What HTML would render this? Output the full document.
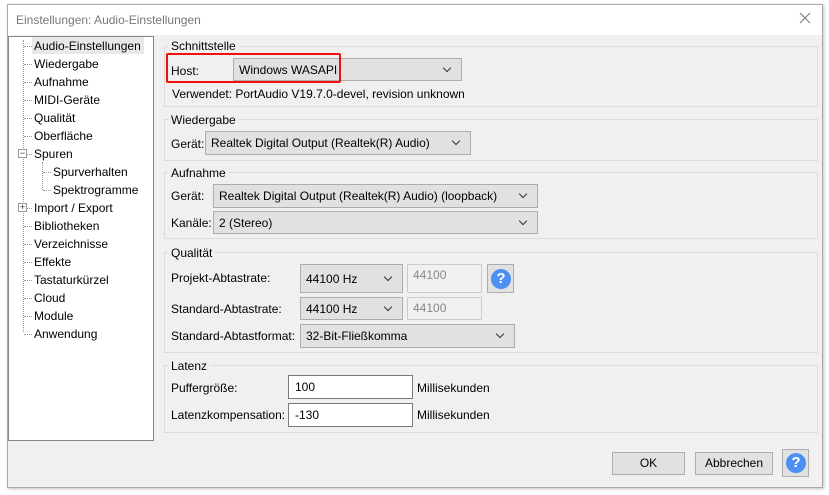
<!DOCTYPE html><html><head><style>
*{box-sizing:border-box;margin:0;padding:0}
body{width:829px;height:495px;background:#fff;font-family:"Liberation Sans",sans-serif;font-size:12px;color:#000;position:relative;overflow:hidden}
.a{position:absolute;white-space:nowrap}
.win{position:absolute;left:7px;top:4px;width:816px;height:484px;border:1px solid #aaa;background:#f0f0f0;box-shadow:1px 1px 3px rgba(0,0,0,.25)}
.title{position:absolute;left:8px;top:5px;width:814px;height:30px;background:#fff}
.grp{position:absolute;border:1px solid #dcdcdc;left:164px;width:654px}
.gl{position:absolute;background:#f0f0f0;padding:0 3px;left:168px;line-height:14px}
.cb{position:absolute;background:#e1e1e1;border:1px solid #adadad;padding-left:5px;display:flex;align-items:center;white-space:nowrap}
.cb:after{content:"";position:absolute;right:11px;top:50%;margin-top:-5px;width:5px;height:5px;border-right:1px solid #333;border-bottom:1px solid #333;transform:rotate(45deg)}
.tb{position:absolute;background:#fff;border:1px solid #7a7a7a;padding-left:6px;display:flex;align-items:center}
.dis{position:absolute;background:#f0f0f0;border:1px solid #ccc;color:#888;padding-left:5px;line-height:20px}
.btn{position:absolute;background:#e1e1e1;border:1px solid #adadad;text-align:center;line-height:21px}
.help{position:absolute;background:#e1e1e1;border:1px solid #adadad}
.help i{position:absolute;left:3px;top:3px;width:20px;height:20px;border-radius:50%;background:#4e8ff2;color:#fff;font-style:normal;font-weight:bold;font-size:15px;text-align:center;line-height:20px}
.tree{position:absolute;left:8px;top:36px;width:146px;height:405px;background:#fff;border:1px solid #828790}
.ti{position:absolute;line-height:16px}
.dl{position:absolute;border-top:1px dotted #999;height:0}
.vl{position:absolute;border-left:1px dotted #999;width:0}
.pm{position:absolute;width:9px;height:9px;border:1px solid #999;background:#fff;font-size:9px;line-height:7px;text-align:center;color:#333}
</style></head><body>
<div class="win"></div>
<div class="title"></div>
<div class="a" style="left:16px;top:13px;color:#777">Einstellungen: Audio-Einstellungen</div>
<svg class="a" style="left:799px;top:12px" width="12" height="12"><path d="M1 1L11 11M11 1L1 11" stroke="#777" stroke-width="1"/></svg>

<div class="tree"></div>
<div class="vl" style="left:23px;top:40px;height:292px"></div>
<div class="vl" style="left:42px;top:162px;height:28px"></div>
<div class="a" style="left:32px;top:37px;width:112px;height:17px;background:#e8e8e8"></div>
<div class="dl" style="left:24px;top:46px;width:8px"></div><div class="ti" style="left:34px;top:38px">Audio-Einstellungen</div>
<div class="dl" style="left:24px;top:64px;width:8px"></div><div class="ti" style="left:34px;top:56px">Wiedergabe</div>
<div class="dl" style="left:24px;top:82px;width:8px"></div><div class="ti" style="left:34px;top:74px">Aufnahme</div>
<div class="dl" style="left:24px;top:100px;width:8px"></div><div class="ti" style="left:34px;top:92px">MIDI-Geräte</div>
<div class="dl" style="left:24px;top:118px;width:8px"></div><div class="ti" style="left:34px;top:110px">Qualität</div>
<div class="dl" style="left:24px;top:136px;width:8px"></div><div class="ti" style="left:34px;top:128px">Oberfläche</div>
<div class="dl" style="left:24px;top:154px;width:8px"></div><div class="pm" style="left:18px;top:149px">−</div><div class="ti" style="left:34px;top:146px">Spuren</div>
<div class="dl" style="left:43px;top:172px;width:8px"></div><div class="ti" style="left:53px;top:164px">Spurverhalten</div>
<div class="dl" style="left:43px;top:190px;width:8px"></div><div class="ti" style="left:53px;top:182px">Spektrogramme</div>
<div class="dl" style="left:24px;top:208px;width:8px"></div><div class="pm" style="left:18px;top:203px">+</div><div class="ti" style="left:34px;top:200px">Import / Export</div>
<div class="dl" style="left:24px;top:226px;width:8px"></div><div class="ti" style="left:34px;top:218px">Bibliotheken</div>
<div class="dl" style="left:24px;top:244px;width:8px"></div><div class="ti" style="left:34px;top:236px">Verzeichnisse</div>
<div class="dl" style="left:24px;top:262px;width:8px"></div><div class="ti" style="left:34px;top:254px">Effekte</div>
<div class="dl" style="left:24px;top:280px;width:8px"></div><div class="ti" style="left:34px;top:272px">Tastaturkürzel</div>
<div class="dl" style="left:24px;top:298px;width:8px"></div><div class="ti" style="left:34px;top:290px">Cloud</div>
<div class="dl" style="left:24px;top:316px;width:8px"></div><div class="ti" style="left:34px;top:308px">Module</div>
<div class="dl" style="left:24px;top:334px;width:8px"></div><div class="ti" style="left:34px;top:326px">Anwendung</div>

<div class="grp" style="top:46px;height:61px"></div><div class="gl" style="top:39px">Schnittstelle</div>
<div class="a" style="left:171px;top:64px">Host:</div>
<div class="cb" style="left:233px;top:58px;width:229px;height:23px">Windows WASAPI</div>
<div class="a" style="left:166px;top:53px;width:175px;height:30px;border:2px solid #f01010;border-radius:2px"></div>
<div class="a" style="left:172px;top:87px">Verwendet: PortAudio V19.7.0-devel, revision unknown</div>

<div class="grp" style="top:119px;height:42px"></div><div class="gl" style="top:113px">Wiedergabe</div>
<div class="a" style="left:171px;top:137px">Gerät:</div>
<div class="cb" style="left:205px;top:131px;width:266px;height:24px">Realtek Digital Output (Realtek(R) Audio)</div>

<div class="grp" style="top:172px;height:67px"></div><div class="gl" style="top:166px">Aufnahme</div>
<div class="a" style="left:171px;top:189px">Gerät:</div>
<div class="cb" style="left:213px;top:184px;width:325px;height:24px">Realtek Digital Output (Realtek(R) Audio) (loopback)</div>
<div class="a" style="left:171px;top:216px">Kanäle:</div>
<div class="cb" style="left:213px;top:211px;width:325px;height:23px">2 (Stereo)</div>

<div class="grp" style="top:252px;height:101px"></div><div class="gl" style="top:246px">Qualität</div>
<div class="a" style="left:171px;top:271px">Projekt-Abtastrate:</div>
<div class="cb" style="left:300px;top:264px;width:103px;height:29px">44100 Hz</div>
<div class="dis" style="left:407px;top:264px;width:75px;height:29px">44100</div>
<div class="help" style="left:487px;top:264px;width:27px;height:29px"><i style="top:4px">?</i></div>
<div class="a" style="left:171px;top:302px">Standard-Abtastrate:</div>
<div class="cb" style="left:300px;top:297px;width:103px;height:23px">44100 Hz</div>
<div class="dis" style="left:407px;top:297px;width:75px;height:23px">44100</div>
<div class="a" style="left:171px;top:329px">Standard-Abtastformat:</div>
<div class="cb" style="left:300px;top:324px;width:215px;height:24px">32-Bit-Fließkomma</div>

<div class="grp" style="top:365px;height:68px"></div><div class="gl" style="top:359px">Latenz</div>
<div class="a" style="left:171px;top:381px">Puffergröße:</div>
<div class="tb" style="left:288px;top:375px;width:125px;height:24px">100</div>
<div class="a" style="left:417px;top:381px">Millisekunden</div>
<div class="a" style="left:171px;top:408px">Latenzkompensation:</div>
<div class="tb" style="left:288px;top:403px;width:125px;height:24px">-130</div>
<div class="a" style="left:417px;top:408px">Millisekunden</div>

<div class="btn" style="left:612px;top:452px;width:73px;height:23px">OK</div>
<div class="btn" style="left:695px;top:452px;width:78px;height:23px">Abbrechen</div>
<div class="help" style="left:782px;top:449px;width:27px;height:28px"><i style="top:3px">?</i></div>
</body></html>
